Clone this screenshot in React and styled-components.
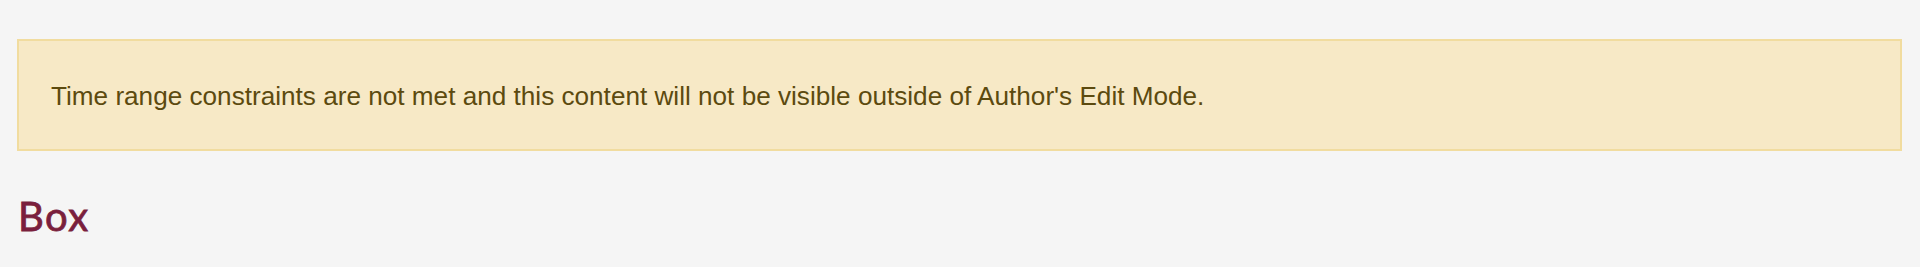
import React from "react";
import styled, { createGlobalStyle } from "styled-components";

const GlobalStyle = createGlobalStyle`
  html, body {
    margin: 0;
    padding: 0;
    background: #f5f5f5;
  }
`;

const Page = styled.div`
  display: flex;
  flex-direction: column;
  padding: 39px 18px 0 17px;
  min-height: 267px;
  box-sizing: border-box;
`;

const Notice = styled.div`
  background: #f7e9c6;
  border: 2px solid #f1dc9f;
  padding: 35px 33px 33px 32px;
  color: #5c4a0f;
  font-family: "Liberation Sans", Arial, sans-serif;
  font-size: 26.15px;
  line-height: 40px;
`;

const Heading = styled.h2`
  margin: 42px 0 0 1px;
  color: #7a1f3d;
  font-family: Lato, "Open Sans", sans-serif;
  font-weight: 400;
  font-size: 40px;
  line-height: 46px;
  letter-spacing: 1.5px;
  -webkit-text-stroke: 0.8px #7a1f3d;
`;

export default function App() {
  return (
    <>
      <GlobalStyle />
      <Page>
        <Notice>
          Time range constraints are not met and this content will not be
          visible outside of Author's Edit Mode.
        </Notice>
        <Heading>Box</Heading>
      </Page>
    </>
  );
}
